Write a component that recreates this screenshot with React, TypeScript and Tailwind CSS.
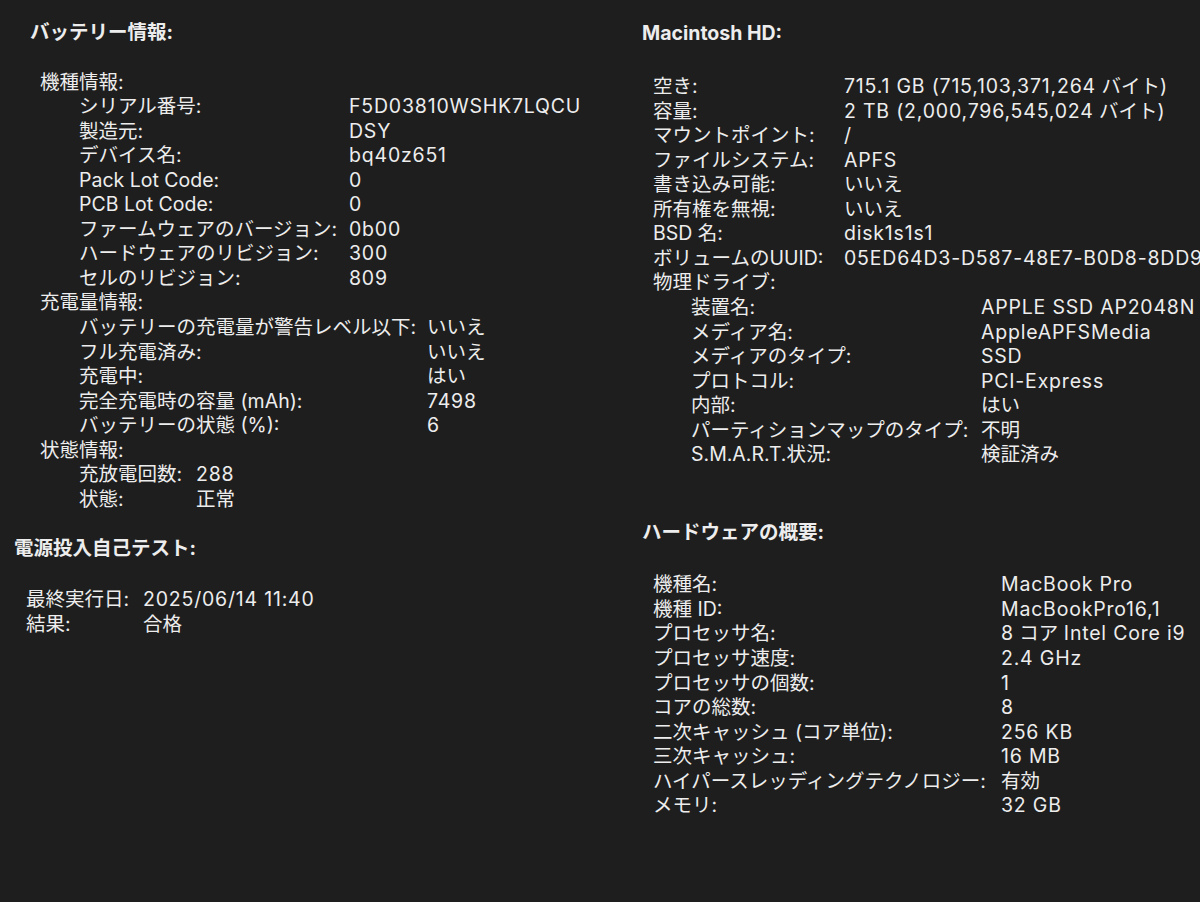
import React from 'react';

type Row = [string, string];

// battery panel data
const modelInfo: Row[] = [
  ['シリアル番号:', 'F5D03810WSHK7LQCU'],
  ['製造元:', 'DSY'],
  ['デバイス名:', 'bq40z651'],
  ['Pack Lot Code:', '0'],
  ['PCB Lot Code:', '0'],
  ['ファームウェアのバージョン:', '0b00'],
  ['ハードウェアのリビジョン:', '300'],
  ['セルのリビジョン:', '809'],
];

const chargeInfo: Row[] = [
  ['バッテリーの充電量が警告レベル以下:', 'いいえ'],
  ['フル充電済み:', 'いいえ'],
  ['充電中:', 'はい'],
  ['完全充電時の容量 (mAh):', '7498'],
  ['バッテリーの状態 (%):', '6'],
];

const healthInfo: Row[] = [
  ['充放電回数:', '288'],
  ['状態:', '正常'],
];

const postInfo: Row[] = [
  ['最終実行日:', '2025/06/14 11:40'],
  ['結果:', '合格'],
];

// disk panel data
const volumeInfo: Row[] = [
  ['空き:', '715.1 GB (715,103,371,264 バイト)'],
  ['容量:', '2 TB (2,000,796,545,024 バイト)'],
  ['マウントポイント:', '/'],
  ['ファイルシステム:', 'APFS'],
  ['書き込み可能:', 'いいえ'],
  ['所有権を無視:', 'いいえ'],
  ['BSD 名:', 'disk1s1s1'],
  ['ボリュームのUUID:', '05ED64D3-D587-48E7-B0D8-8DD9C1A27F40'],
];

const driveInfo: Row[] = [
  ['装置名:', 'APPLE SSD AP2048N'],
  ['メディア名:', 'AppleAPFSMedia'],
  ['メディアのタイプ:', 'SSD'],
  ['プロトコル:', 'PCI-Express'],
  ['内部:', 'はい'],
  ['パーティションマップのタイプ:', '不明'],
  ['S.M.A.R.T.状況:', '検証済み'],
];

const hardwareInfo: Row[] = [
  ['機種名:', 'MacBook Pro'],
  ['機種 ID:', 'MacBookPro16,1'],
  ['プロセッサ名:', '8 コア Intel Core i9'],
  ['プロセッサ速度:', '2.4 GHz'],
  ['プロセッサの個数:', '1'],
  ['コアの総数:', '8'],
  ['二次キャッシュ (コア単位):', '256 KB'],
  ['三次キャッシュ:', '16 MB'],
  ['ハイパースレッディングテクノロジー:', '有効'],
  ['メモリ:', '32 GB'],
];

// Latin runs in values are a touch wider in the original (SF vs Inter)
const Value: React.FC<{ text: string }> = ({ text }) => (
  <div className="whitespace-nowrap">
    {text.split(/([\x21-\x7e][\x20-\x7e]*[\x21-\x7e]|[\x21-\x7e])/).map((part, i) =>
      /^[\x20-\x7e]+$/.test(part) && part.trim() ? (
        <span key={i} className="tracking-[0.8px]">
          {part}
        </span>
      ) : (
        <React.Fragment key={i}>{part}</React.Fragment>
      )
    )}
  </div>
);

const InfoGrid: React.FC<{ rows: Row[]; cols: string; className?: string }> = ({
  rows,
  cols,
  className = '',
}) => (
  <div className={`grid ${cols} ${className}`}>
    {rows.map(([label, value]) => (
      <React.Fragment key={label}>
        <div className="whitespace-nowrap">{label}</div>
        <Value text={value} />
      </React.Fragment>
    ))}
  </div>
);

export default function App() {
  return (
    <div className="flex w-[1200px] h-[902px] overflow-hidden bg-[#1e1e1e] text-[#ededed] text-[19.5px] leading-[24.55px] font-['Inter','Noto_Sans_CJK_JP',sans-serif]">
      {/* Battery panel */}
      <div className="w-[615px] shrink-0 pt-[20px]">
        <div className="pl-[30px] font-bold">バッテリー情報:</div>
        <div className="mt-[25px] pl-[40px]">
          <div>機種情報:</div>
          <InfoGrid rows={modelInfo} cols="grid-cols-[270px_1fr]" className="pl-[39px]" />
          <div>充電量情報:</div>
          <InfoGrid rows={chargeInfo} cols="grid-cols-[348px_1fr]" className="pl-[39px]" />
          <div>状態情報:</div>
          <InfoGrid rows={healthInfo} cols="grid-cols-[117px_1fr]" className="pl-[39px]" />
        </div>

        <div className="mt-[25px] pl-[14px] font-bold">電源投入自己テスト:</div>
        <InfoGrid rows={postInfo} cols="grid-cols-[117px_1fr]" className="mt-[26.5px] pl-[26px]" />
      </div>

      {/* Disk / hardware panel */}
      <div className="flex-1 min-w-0 overflow-hidden pt-[21px] pl-[27px]">
        <div className="font-bold">Macintosh HD:</div>
        <div className="mt-[28.5px] pl-[11px]">
          <InfoGrid rows={volumeInfo} cols="grid-cols-[191px_1fr]" />
          <div>物理ドライブ:</div>
          <InfoGrid rows={driveInfo} cols="grid-cols-[290px_1fr]" className="pl-[38px]" />
        </div>

        <div className="mt-[53.5px] font-bold">ハードウェアの概要:</div>
        <InfoGrid rows={hardwareInfo} cols="grid-cols-[348px_1fr]" className="mt-[27.5px] pl-[11px]" />
      </div>
    </div>
  );
}
